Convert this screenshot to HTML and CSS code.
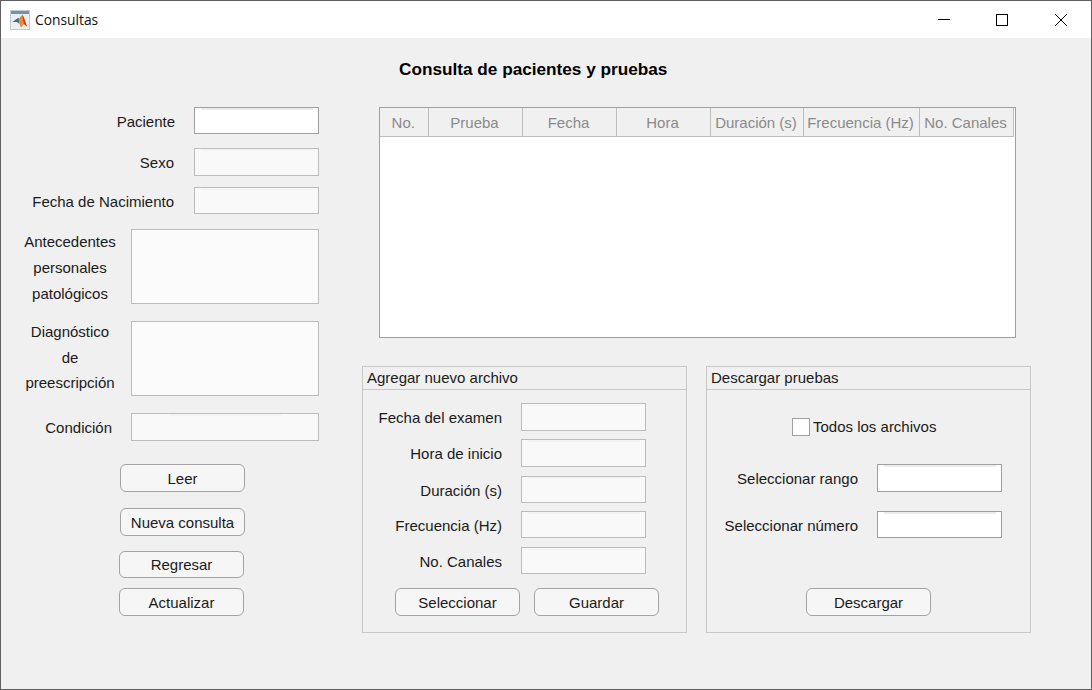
FILE: index.html
```html
<!DOCTYPE html>
<html lang="es">

<head>
  <meta charset="UTF-8">
  <title>Consultas</title>
  <link rel="stylesheet" href="styles.css">
</head>

<body>
  <div class="window">
    <header class="titlebar">
      <svg class="app-icon" width="20" height="20" viewBox="0 0 20 20">
        <rect x="0.5" y="0.5" width="19" height="19" fill="#eceef0" stroke="#c4c8cc" />
        <rect x="1" y="1" width="18" height="3" fill="#6f93b8" />
        <path d="M2.500 12 L8 8 L10 9 L9 13.500 L7 12 Z" fill="#2a6cab" />
        <path d="M8.500 9 L12.500 4.500 L17 16.500 L14 14 L11 17.500 L9 13 Z" fill="#ee8a2c" />
        <path d="M12.500 4.500 L14.500 9 L17 16.500 L14 14 L13 10 Z" fill="#c9401e" />
      </svg>
      <span class="app-name">Consultas</span>
      <div class="controls">
        <button class="control" aria-label="Minimizar">
          <svg width="12" height="12" viewBox="0 0 12 12">
            <path d="M0 5.500 H12" stroke="#000" fill="none" />
          </svg>
        </button>
        <button class="control" aria-label="Maximizar">
          <svg width="12" height="12" viewBox="0 0 12 12">
            <rect x="0.500" y="0.500" width="11" height="11" stroke="#000" fill="none" />
          </svg>
        </button>
        <button class="control" aria-label="Cerrar">
          <svg width="12" height="12" viewBox="0 0 12 12">
            <path d="M0 0 L12 12 M12 0 L0 12" stroke="#000" fill="none" />
          </svg>
        </button>
      </div>
    </header>

    <h1 class="heading">Consulta de pacientes y pruebas</h1>

    <main class="content">
      <section class="patient">
        <div class="field field-paciente">
          <label class="label">Paciente</label>
          <input class="input input-active" type="text">
        </div>
        <div class="field field-sexo">
          <label class="label label-tall label-inset">Sexo</label>
          <input class="input input-tall" type="text" disabled>
        </div>
        <div class="field field-nacimiento">
          <label class="label label-inset">Fecha de Nacimiento</label>
          <input class="input" type="text" disabled>
        </div>
        <div class="field field-antecedentes">
          <label class="label-block">Antecedentes<br>personales<br>patológicos</label>
          <textarea class="area" disabled></textarea>
        </div>
        <div class="field field-diagnostico">
          <label class="label-block">Diagnóstico<br>de<br>preescripción</label>
          <textarea class="area" disabled></textarea>
        </div>
        <div class="field field-condicion">
          <label class="label label-tall">Condición</label>
          <input class="input input-wide input-tall" type="text" disabled>
        </div>
        <button class="btn btn-leer">Leer</button>
        <button class="btn btn-nueva">Nueva consulta</button>
        <button class="btn btn-regresar">Regresar</button>
        <button class="btn btn-actualizar">Actualizar</button>
      </section>

      <div class="right">
        <div class="table-box">
          <table class="tests">
            <thead>
              <tr>
                <th class="col-no">No.</th>
                <th class="col-std">Prueba</th>
                <th class="col-std">Fecha</th>
                <th class="col-std">Hora</th>
                <th class="col-dur">Duración (s)</th>
                <th class="col-freq">Frecuencia (Hz)</th>
                <th class="col-can">No. Canales</th>
              </tr>
            </thead>
          </table>
        </div>

        <div class="panels">
          <section class="panel">
            <h2 class="panel-title">Agregar nuevo archivo</h2>
            <div class="row row-first">
              <label class="row-label label-tall">Fecha del examen</label>
              <input class="input input-tall" type="text" disabled>
            </div>
            <div class="row row-near">
              <label class="row-label label-tall">Hora de inicio</label>
              <input class="input input-tall" type="text" disabled>
            </div>
            <div class="row row-far">
              <label class="row-label">Duración (s)</label>
              <input class="input" type="text" disabled>
            </div>
            <div class="row row-near">
              <label class="row-label">Frecuencia (Hz)</label>
              <input class="input" type="text" disabled>
            </div>
            <div class="row row-far">
              <label class="row-label">No. Canales</label>
              <input class="input" type="text" disabled>
            </div>
            <div class="panel-actions">
              <button class="btn">Seleccionar</button>
              <button class="btn">Guardar</button>
            </div>
          </section>

          <section class="panel">
            <h2 class="panel-title">Descargar pruebas</h2>
            <label class="check-row">
              <span class="check"></span>
              <span class="check-text">Todos los archivos</span>
            </label>
            <div class="row row-rango">
              <label class="row-label label-tall">Seleccionar rango</label>
              <input class="input input-active input-tall" type="text">
            </div>
            <div class="row row-numero">
              <label class="row-label">Seleccionar número</label>
              <input class="input input-active" type="text">
            </div>
            <button class="btn btn-descargar">Descargar</button>
          </section>
        </div>
      </div>
    </main>
  </div>
</body>

</html>
```

FILE: styles.css
```css
* {
  box-sizing: border-box;
}

body {
  margin: 0;
  font-family: 'Liberation Sans', Arial, sans-serif;
  font-size: 15px;
  color: #1a1a1a;
  background-color: #f0f0f0;
}

.window {
  width: 1092px;
  height: 690px;
  overflow: hidden;
  border: 1px solid #5f5f5f;
  background-color: #f0f0f0;
}

/* title bar */
.titlebar {
  display: flex;
  align-items: center;
  height: 37px;
  padding-left: 9px;
  background-color: #fff;
}

.app-icon {
  flex: none;
}

.app-name {
  margin-left: 5px;
  font-family: 'Open Sans', sans-serif;
  font-size: 13.8px;
  color: #111;
}

.controls {
  display: flex;
  margin-left: auto;
  padding-right: 1px;
}

.control {
  display: flex;
  align-items: center;
  justify-content: center;
  width: 58px;
  height: 37px;
  padding: 0;
  border: none;
  background: none;
}

.control:nth-child(2) {
  margin-right: 1px;
}

.heading {
  height: 69px;
  margin: 0;
  padding: 21px 0 0 398px;
  font-size: 17.2px;
  font-weight: bold;
  line-height: 20px;
  color: #000;
}

.content {
  display: flex;
}

/* left column */
.patient {
  display: flex;
  flex: none;
  flex-direction: column;
  align-items: flex-start;
  width: 318px;
}

.field {
  display: flex;
  align-items: center;
  justify-content: flex-end;
  width: 100%;
}

.label {
  margin-right: 19px;
  padding-top: 2px;
  white-space: nowrap;
}

.label-inset {
  margin-right: 20px;
}

.label-block {
  width: 94px;
  margin-right: 14px;
  text-align: center;
}

.field-sexo {
  margin-top: 14px;
}

.field-nacimiento {
  margin-top: 11px;
}

.field-antecedentes {
  height: 75px;
  margin-top: 15px;
  line-height: 26px;
}

.field-antecedentes .label-block {
  padding-top: 2px;
}

.field-diagnostico {
  height: 75px;
  margin-top: 17px;
  line-height: 25.5px;
}

.field-diagnostico .label-block {
  padding-bottom: 2px;
}

.field-condicion {
  margin-top: 17px;
}

.btn {
  width: 125px;
  height: 28px;
  padding: 1px 0 0;
  border: 1px solid #a3a3a3;
  border-radius: 6px;
  font-family: inherit;
  font-size: 15px;
  color: #1a1a1a;
  background-color: #f6f6f6;
}

.btn-leer {
  margin: 23px 0 0 119px;
}

.btn-nueva {
  margin: 16px 0 0 119px;
}

.btn-regresar {
  height: 27px;
  margin: 15px 0 0 118px;
  padding-top: 0;
}

.btn-actualizar {
  margin: 10px 0 0 118px;
}

/* inputs */
.input {
  flex: none;
  width: 125px;
  height: 27px;
  padding: 0;
  border: 1px solid #bcbcbc;
  border-radius: 0;
  background: linear-gradient(#f3f3f3, #f3f3f3) no-repeat center 0 / 112px 2px #f9f9f9;
}

.input-tall {
  height: 28px;
}

.input-wide {
  width: 188px;
}

.input-active {
  border-color: #a0a0a0;
  background: linear-gradient(#ececec, #ececec) no-repeat center 0 / 112px 2px #fff;
}

.area {
  flex: none;
  width: 188px;
  height: 75px;
  padding: 0;
  border: 1px solid #bcbcbc;
  border-radius: 0;
  resize: none;
  background-color: #fbfbfb;
}

/* right side */
.right {
  margin-left: 43px;
}

.table-box {
  width: 637px;
  height: 231px;
  margin-left: 17px;
  border: 1px solid #a0a0a0;
  background-color: #fff;
}

.tests {
  width: 633px;
  table-layout: fixed;
  border-collapse: collapse;
}

.tests th {
  height: 28px;
  padding: 2px 1px 0 0;
  border-right: 1px solid #bdbdbd;
  border-bottom: 1px solid #bdbdbd;
  font-weight: normal;
  color: #8a8a8a;
  background-color: #f0f0f0;
  white-space: nowrap;
}

.col-no {
  width: 48px;
}

.col-std {
  width: 94px;
}

.col-dur {
  width: 93px;
}

.col-freq {
  width: 116px;
}

.col-can {
  width: 94px;
}

.panels {
  display: flex;
  gap: 19px;
  margin-top: 28px;
}

.panel {
  width: 325px;
  height: 267px;
  border: 1px solid #c8c8c8;
}

.panel-title {
  height: 23px;
  margin: 0;
  padding-left: 4px;
  border-bottom: 1px solid #c8c8c8;
  font-size: 15px;
  font-weight: normal;
  line-height: 22px;
}

.row {
  display: flex;
  align-items: center;
}

.row-label {
  flex: none;
  width: 139px;
  margin-right: 19px;
  padding-top: 2px;
  text-align: right;
  white-space: nowrap;
}

.label-tall {
  padding-top: 0;
}

.row-first {
  margin-top: 13px;
}

.row-near {
  margin-top: 8px;
}

.row-far {
  margin-top: 9px;
}

.row-rango {
  margin-top: 28px;
  margin-left: 12px;
}

.row-numero {
  margin-top: 19px;
  margin-left: 12px;
}

.panel-actions {
  display: flex;
  gap: 14px;
  margin: 14px 0 0 32px;
}

.check-row {
  display: flex;
  align-items: center;
  gap: 3px;
  margin: 28px 0 0 85px;
}

.check {
  flex: none;
  width: 18px;
  height: 18px;
  border: 1px solid #a0a0a0;
  background-color: #fff;
}

.check-text {
  padding-bottom: 1px;
}

.btn-descargar {
  display: block;
  margin: 50px 0 0 99px;
}
```
